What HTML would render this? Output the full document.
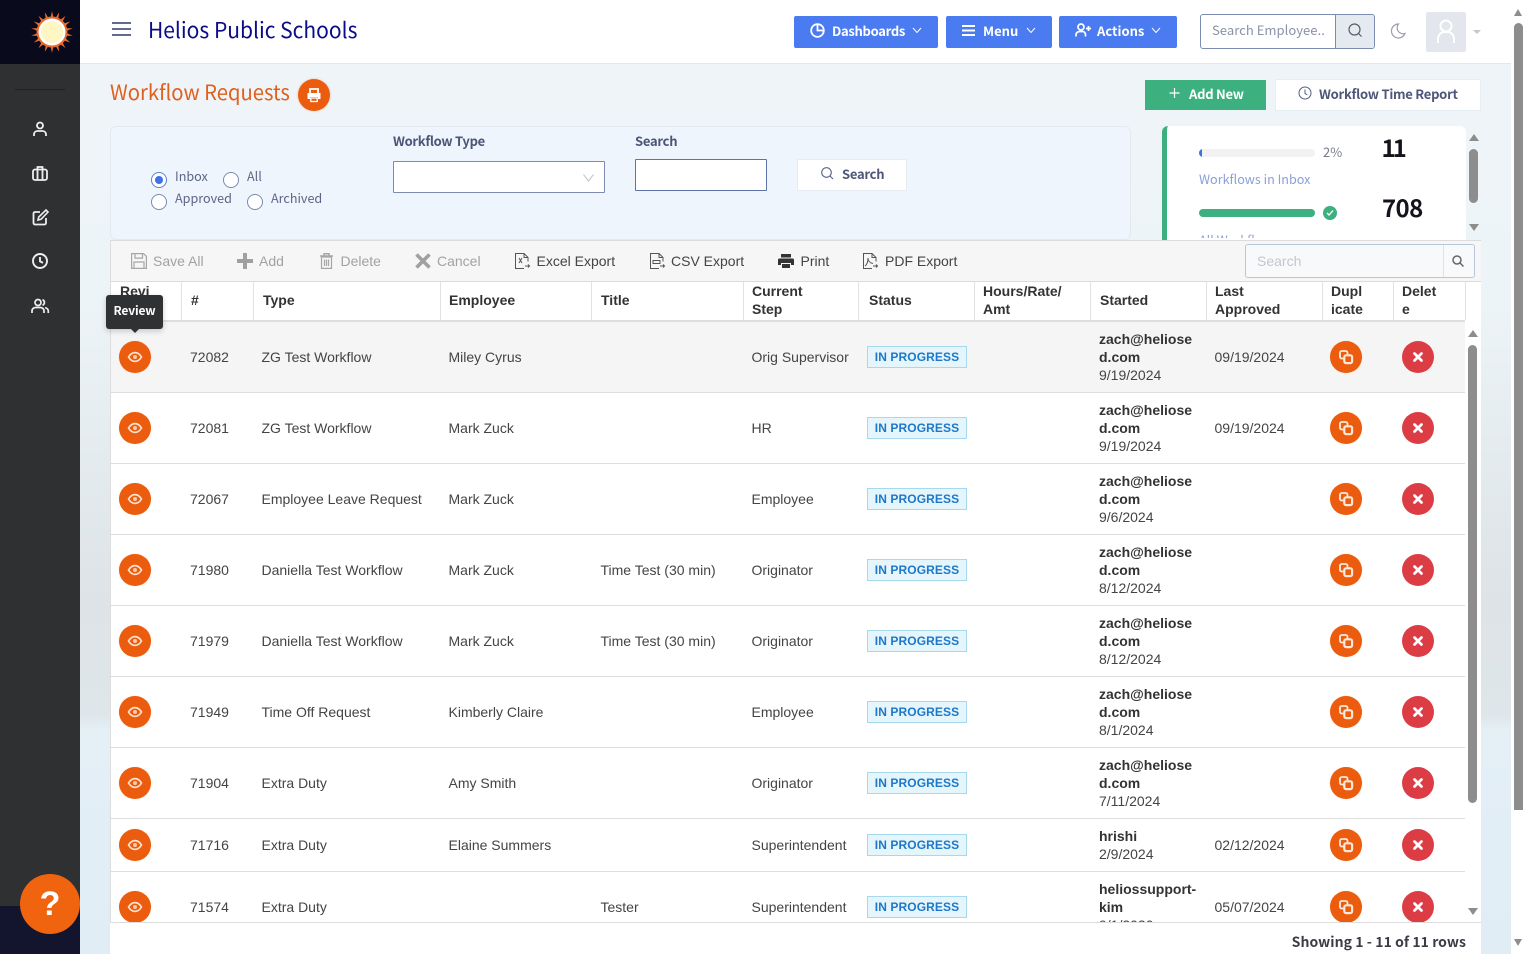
<!DOCTYPE html>
<html lang="en"><head><meta charset="utf-8"><title>Workflow Requests</title>
<style>
*{box-sizing:border-box}
html,body{margin:0;padding:0;width:1526px;height:954px;overflow:hidden}
body{position:relative;font-family:"Liberation Sans",sans-serif;font-size:14px;color:#444;
background:linear-gradient(180deg,#eef4f7 64px,#edf4f8 300px,#e4ebef 460px,#dde3e7 600px,#dfe6ea 715px,#e4eff6 730px,#e0edf5 954px)}
.a{position:absolute;white-space:nowrap}
.n{font-family:"Noto Sans CJK SC","Liberation Sans",sans-serif}
svg{position:absolute;overflow:visible;fill:none}
.btn{position:absolute;top:16px;height:32px;background:#4a7bf0;border-radius:2px;color:#fff}
.btn span{position:absolute;top:0;font:700 13px/30px "Noto Sans CJK SC",sans-serif;white-space:nowrap}
.rd{position:absolute;width:16px;height:16px;border:1px solid #7c89ad;border-radius:50%;background:#fff}
.lab{position:absolute;font:12.6px/16px "Noto Sans CJK SC",sans-serif;color:#5d6686;white-space:nowrap}
.tb{position:absolute;top:240px;height:42px;font-size:14px;line-height:42px;white-space:nowrap}
.g{color:#a2a2a2}
.h{position:absolute;top:281px;height:38px;font-weight:700;color:#333;line-height:18px;white-space:nowrap;display:flex;align-items:center}
.vl{position:absolute;top:282px;height:38px;width:1px;background:#e2e2e2}
.row{position:absolute;left:111px;width:1354px;border-bottom:1px solid #ddd;overflow:visible}
.row>span{position:absolute;white-space:nowrap;top:0;line-height:inherit}
.c1{left:79px}.c2{left:150.5px}.c3{left:337.5px}.c4{left:489.5px}.c5{left:640.5px}.c8{left:988px;line-height:18px!important}.c9{left:1103.5px}
.b{left:756px;height:22px;width:100px;background:#e5f5fc;border:1px solid #a6d8ee;color:#1d78c9;font-weight:700;font-size:12px;line-height:21px!important;text-align:center;letter-spacing:.1px}
.c{position:absolute;width:32px;height:32px;border-radius:50%;background:#ec5c0e;box-shadow:0 0 1px #f9c9a4}
.c.r{background:#dc3d44;box-shadow:none}
.c svg{left:0;top:0}
.e{font-weight:700;color:#333}
</style></head><body>
<svg width="0" height="0" style="position:absolute"><defs>
<symbol id="eye" viewBox="0 0 32 32"><path d="M9.500 16c1.800-3 4-4.400 6.500-4.400s4.700 1.400 6.500 4.400c-1.800 3-4 4.400-6.500 4.400s-4.700-1.400-6.500-4.400z" stroke="#fde3d2" stroke-width="1.700"/><circle cx="16" cy="16" r="2" fill="#fbc9a8"/></symbol>
<symbol id="dup" viewBox="0 0 32 32"><rect x="10" y="10" width="7.500" height="7.500" rx="1.800" stroke="#fde8da" stroke-width="1.800" fill="none"/><rect x="14.300" y="14.300" width="7.800" height="7.800" rx="1.800" fill="#ec5c0e" stroke="#fde8da" stroke-width="2.200"/></symbol>
<symbol id="x" viewBox="0 0 32 32"><path d="M12.500 12.500l7 7M19.500 12.500l-7 7" stroke="#fff" stroke-width="2.700" stroke-linecap="round"/></symbol>
</defs></svg>

<!-- Sidebar -->
<div class="a" style="left:0;top:0;width:80px;height:954px;background:#2e3032"></div>
<div class="a" style="left:0;top:0;width:80px;height:64px;background:#0a0a1d"></div>
<div class="a" style="left:0;top:906px;width:80px;height:48px;background:#13152f"></div>
<svg style="left:52px;top:32px" width="1" height="1"><g fill="#e96c2c">
<polygon points="-4.500,0 4.500,0 0,-21"/><polygon points="-4.500,0 4.500,0 0,-21" transform="rotate(20)"/><polygon points="-4.500,0 4.500,0 0,-21" transform="rotate(40)"/><polygon points="-4.500,0 4.500,0 0,-21" transform="rotate(60)"/><polygon points="-4.500,0 4.500,0 0,-21" transform="rotate(80)"/><polygon points="-4.500,0 4.500,0 0,-21" transform="rotate(100)"/><polygon points="-4.500,0 4.500,0 0,-21" transform="rotate(120)"/><polygon points="-4.500,0 4.500,0 0,-21" transform="rotate(140)"/><polygon points="-4.500,0 4.500,0 0,-21" transform="rotate(160)"/><polygon points="-4.500,0 4.500,0 0,-21" transform="rotate(180)"/><polygon points="-4.500,0 4.500,0 0,-21" transform="rotate(200)"/><polygon points="-4.500,0 4.500,0 0,-21" transform="rotate(220)"/><polygon points="-4.500,0 4.500,0 0,-21" transform="rotate(240)"/><polygon points="-4.500,0 4.500,0 0,-21" transform="rotate(260)"/><polygon points="-4.500,0 4.500,0 0,-21" transform="rotate(280)"/><polygon points="-4.500,0 4.500,0 0,-21" transform="rotate(300)"/><polygon points="-4.500,0 4.500,0 0,-21" transform="rotate(320)"/><polygon points="-4.500,0 4.500,0 0,-21" transform="rotate(340)"/>
<circle r="15.500"/></g><circle r="13.500" fill="#fff"/><circle r="11" fill="#fff6c4"/></svg>
<div class="a" style="left:15px;top:89px;width:50px;height:1px;background:#1e2022"></div>
<svg style="left:32px;top:121px" width="16" height="16" stroke="#eee" stroke-width="1.800"><circle cx="8" cy="4.500" r="3"/><path d="M2 15v-1.500c0-2 1.500-3.500 3.500-3.500h5c2 0 3.500 1.500 3.500 3.500V15"/></svg>
<svg style="left:32px;top:165px" width="16" height="16" stroke="#eee" stroke-width="1.800"><rect x="1" y="4.500" width="14" height="10.500" rx="2"/><path d="M5.500 4.500V2h5v2.500M5.500 4.500V15M10.500 4.500V15"/></svg>
<svg style="left:32px;top:209px" width="16" height="16" stroke="#eee" stroke-width="1.800"><path d="M8 3H3a1.500 1.500 0 0 0-1.500 1.500V14A1.500 1.500 0 0 0 3 15.500h9.500A1.500 1.500 0 0 0 14 14V9"/><path d="M6 11l.7-3L14 1l2 2-7 7.300z" stroke-width="1.600"/></svg>
<svg style="left:32px;top:253px" width="16" height="16" stroke="#eee" stroke-width="1.900"><circle cx="8" cy="8" r="7"/><path d="M8 4v4.300l3 1.600"/></svg>
<svg style="left:31px;top:298px" width="18" height="16" stroke="#eee" stroke-width="1.700"><circle cx="7" cy="4.500" r="3"/><path d="M1 15v-2c0-2 1.500-3.500 3.500-3.500h5c2 0 3.500 1.500 3.500 3.500v2M11.500 1.700a3 3 0 0 1 0 5.600M14 9.700c2 .3 3.300 1.700 3.300 3.500V15"/></svg>
<div class="a" style="left:20px;top:874px;width:60px;height:60px;border-radius:50%;background:#f0640f;color:#fff;font:700 34px/61px 'Liberation Sans',sans-serif;text-align:center">?</div>

<!-- Header -->
<div class="a" style="left:80px;top:0;width:1431px;height:64px;background:#fff;border-bottom:1px solid #e4e8eb"></div>
<svg style="left:112px;top:22px" width="20" height="14" stroke="#4d5680" stroke-width="1.800"><path d="M0 1h19M0 7h19M0 13h19"/></svg>
<div class="a n" style="left:148px;top:11px;font-size:22px;line-height:36px;color:#0c0c8a;transform:scaleX(.955);transform-origin:0 0">Helios Public Schools</div>

<div class="btn" style="left:794px;width:144px"><svg style="left:16px;top:7px" width="15" height="15" stroke="#fff" stroke-width="1.800"><circle cx="7.500" cy="7.500" r="6.300"/><path d="M7.500 1.200V7.500H13.800"/></svg><span style="left:38px;letter-spacing:-.3px">Dashboards</span><svg style="left:118px;top:11px" width="10" height="7" stroke="#fff" stroke-width="1"><path d="M1 1l4 4.500L9 1"/></svg></div>
<div class="btn" style="left:946px;width:106px"><svg style="left:16px;top:9px" width="14" height="11" stroke="#fff" stroke-width="2"><path d="M0 1h13M0 5.500h13M0 10h13"/></svg><span style="left:37px">Menu</span><svg style="left:80px;top:11px" width="10" height="7" stroke="#fff" stroke-width="1"><path d="M1 1l4 4.500L9 1"/></svg></div>
<div class="btn" style="left:1059px;width:118px"><svg style="left:16px;top:7px" width="16" height="14" stroke="#fff" stroke-width="1.700"><circle cx="6" cy="4" r="3"/><path d="M1 13.500v-1.500c0-2 1.500-3.500 3.500-3.500h3c2 0 3 1.500 3 3.500v1.500M13.500 3v5M11 5.500h5"/></svg><span style="left:38px">Actions</span><svg style="left:92px;top:11px" width="10" height="7" stroke="#fff" stroke-width="1"><path d="M1 1l4 4.500L9 1"/></svg></div>

<div class="a" style="left:1200px;top:14px;width:175px;height:35px;border:1px solid #7c8bb0;border-radius:3px;background:#fff"></div>
<div class="a" style="left:1335px;top:15px;width:39px;height:33px;background:#e5e9f0;border-left:1px solid #7c8bb0;border-radius:0 2px 2px 0"></div>
<div class="a n" style="left:1212px;top:13px;font-size:13.100px;line-height:33px;color:#8c93a6">Search Employee..</div>
<svg style="left:1348px;top:23px" width="14" height="14" stroke="#555c70" stroke-width="1.200"><circle cx="6.500" cy="6.500" r="5.500"/><path d="M10.500 10.500l3 3"/></svg>
<svg style="left:1390px;top:23px" width="16" height="16" stroke="#9aa0ac" stroke-width="1.200"><path d="M8.500 1A7 7 0 1 0 15 10.500 6 6 0 0 1 8.500 1z"/></svg>
<div class="a" style="left:1426px;top:12px;width:40px;height:40px;background:#e3e7ed;border-radius:2px"></div>
<svg style="left:1436px;top:19px" width="20" height="26" stroke="#fff" stroke-width="2"><circle cx="10" cy="7" r="5.500"/><path d="M2 24v-4c0-4 3-7 6-7h4c3 0 6 3 6 7v4"/></svg>
<div class="a" style="left:1473px;top:30px;border:4px solid transparent;border-top-color:#c4c8ce"></div>

<!-- Page scrollbar -->
<div class="a" style="left:1511px;top:0;width:15px;height:954px;background:#fff"></div>
<div class="a" style="left:1514px;top:23px;width:9px;height:787px;background:#8d8d8d;border-radius:5px 5px 0 0"></div>
<div class="a" style="left:1514px;top:9px;border:4.500px solid transparent;border-top:0;border-bottom:7px solid #8d8d8d"></div>
<div class="a" style="left:1514px;top:939px;border:4.500px solid transparent;border-bottom:0;border-top:7px solid #8d8d8d"></div>

<!-- Title row -->
<div class="a n" style="left:110px;top:76px;font-size:21px;line-height:32px;color:#e0601e;transform:scaleX(.962);transform-origin:0 0">Workflow Requests</div>
<div class="a" style="left:298px;top:79px;width:32px;height:32px;border-radius:50%;background:#ec5c0e;box-shadow:0 0 2px #f6b98e"></div>
<svg style="left:306px;top:87px" width="16" height="16"><path d="M4 6V2h8v4" stroke="#fff" stroke-width="1.800"/><path d="M1.500 6h13v6H12v-2H4v2H1.500z" fill="#fff"/><rect x="4.800" y="11" width="6.400" height="3.500" stroke="#fff" stroke-width="1.300"/></svg>
<div class="a" style="left:1145px;top:80px;width:121px;height:30px;background:#3db07f"></div>
<svg style="left:1169px;top:88px" width="11" height="11" stroke="#fff" stroke-width="1.200"><path d="M5.500 0v10M.5 5h10"/></svg>
<div class="a n" style="left:1189px;top:79px;font-size:13px;font-weight:700;line-height:29px;color:#fff;letter-spacing:-.25px">Add New</div>
<div class="a" style="left:1275px;top:79px;width:206px;height:32px;background:#fff;border:1px solid #e6eef2"></div>
<svg style="left:1298px;top:86px" width="14" height="14" stroke="#535c80" stroke-width="1"><circle cx="7" cy="7" r="6"/><path d="M7 3.500V7.500l2.300 1.300"/></svg>
<div class="a n" style="left:1319px;top:79px;font-size:13px;font-weight:700;line-height:29px;color:#4e5679;letter-spacing:-.25px">Workflow Time Report</div>

<!-- Filter panel -->
<div class="a" style="left:110px;top:126px;width:1021px;height:114px;background:#eef5fc;border:1px solid #e2e9f0;border-radius:6px"></div>
<div class="rd" style="left:151px;top:172px;border-color:#5f7fd6"></div><div class="a" style="left:155px;top:176px;width:8px;height:8px;border-radius:50%;background:#3f72e2"></div>
<div class="rd" style="left:223px;top:172px"></div><div class="rd" style="left:151px;top:194px"></div><div class="rd" style="left:247px;top:194px"></div>
<div class="lab" style="left:175px;top:168px">Inbox</div><div class="lab" style="left:247px;top:168px">All</div><div class="lab" style="left:175px;top:190px">Approved</div><div class="lab" style="left:271px;top:190px">Archived</div>
<div class="a n" style="left:393px;top:132px;font-size:13px;font-weight:700;line-height:18px;color:#4c5578;letter-spacing:-.3px">Workflow Type</div>
<div class="a" style="left:393px;top:161px;width:212px;height:32px;background:#fff;border:1px solid #7c8bb0;border-radius:1px"></div>
<svg style="left:583px;top:174px" width="11" height="8" stroke="#b8bec9" stroke-width="1"><path d="M.5.500l5 6.500 5-6.500"/></svg>
<div class="a n" style="left:635px;top:132px;font-size:13px;font-weight:700;line-height:18px;color:#4c5578;letter-spacing:-.25px">Search</div>
<div class="a" style="left:635px;top:159px;width:132px;height:32px;background:#fff;border:1px solid #5f73ab;border-radius:1px"></div>
<div class="a" style="left:797px;top:159px;width:110px;height:32px;background:#fff;border:1px solid #e6ecf2"></div>
<svg style="left:821px;top:167px" width="13" height="13" stroke="#596284" stroke-width="1.100"><circle cx="5.500" cy="5.500" r="4.800"/><path d="M9 9l3 3"/></svg>
<div class="a n" style="left:842px;top:159px;font-size:13px;font-weight:700;line-height:30px;color:#4e5679;letter-spacing:-.25px">Search</div>

<!-- Stats card -->
<div class="a" style="left:1162px;top:126px;width:304px;height:116px;background:#fff;border-left:5px solid #3db07f;border-radius:6px 6px 0 0;overflow:hidden">
<div class="a" style="left:32px;top:23px;width:116px;height:8px;background:#f2f2f2;border-radius:4px;overflow:hidden"><div style="width:3px;height:8px;background:#3f72e2"></div></div>
<div class="a n" style="left:156px;top:16px;font-size:13px;line-height:20px;color:#777d8c">2%</div>
<div class="a n" style="left:214.500px;top:3px;font-size:24px;font-weight:700;line-height:36px;color:#14141c;letter-spacing:-3px">11</div>
<div class="a n" style="left:32px;top:44px;font-size:12.600px;line-height:18px;color:#8a9fdc">Workflows in Inbox</div>
<div class="a" style="left:32px;top:83px;width:116px;height:8px;background:#3db07f;border-radius:4px"></div>
<div class="a" style="left:156px;top:80px;width:14px;height:14px;border-radius:50%;background:#3db07f"></div>
<svg style="left:159px;top:83px" width="8" height="8" stroke="#fff" stroke-width="1.300"><path d="M1 4l2 2 4-4.500"/></svg>
<div class="a n" style="left:215px;top:63px;font-size:24px;font-weight:700;line-height:36px;color:#14141c;letter-spacing:-.6px">708</div>
<div class="a" style="left:32px;top:0;width:200px;height:112px;overflow:hidden"><div class="a n" style="left:0;top:105px;font-size:12.600px;line-height:18px;color:#8a9fdc">All Workflows</div></div>
</div>
<div class="a" style="left:1469px;top:134px;border:5px solid transparent;border-top:0;border-bottom:7px solid #8d8d8d"></div>
<div class="a" style="left:1469px;top:149px;width:9px;height:54px;background:#8d8d8d;border-radius:5px"></div>
<div class="a" style="left:1469px;top:224px;border:5px solid transparent;border-bottom:0;border-top:7px solid #8d8d8d"></div>

<!-- Grid -->
<div class="a" style="left:110px;top:240px;width:1371px;height:682px;background:#fff;border-left:1px solid #ddd"></div>
<div class="a" style="left:110px;top:240px;width:1371px;height:42px;background:#f6f6f6;border:1px solid #dcdcdc;border-width:1px 0 1px 1px"></div>
<svg style="left:131px;top:253px" width="16" height="16" stroke="#a6a6a6" stroke-width="1.200"><path d="M.6.600h12l2.800 2.800v12H.6zM4 .6v4.500h7.500V.6M3 15.400V9h10v6.400"/></svg><div class="tb g" style="left:153px">Save All</div>
<svg style="left:237px;top:253px" width="16" height="16"><path d="M6 0h4v6h6v4h-6v6H6v-6H0V6h6z" fill="#a0a0a0"/></svg><div class="tb g" style="left:259px">Add</div>
<svg style="left:320px;top:253px" width="13" height="16" stroke="#a6a6a6" stroke-width="1.200"><path d="M1.500 4h10v11.400h-10zM4.500 6.500v6.500M6.500 6.500v6.500M8.500 6.500v6.500"/><path d="M0 3h13M4 3V.8h5V3" stroke-width="1.500"/></svg><div class="tb g" style="left:340.500px">Delete</div>
<svg style="left:415px;top:253px" width="16" height="16" stroke="#a0a0a0" stroke-width="3.600"><path d="M1.500 1.500l13 13M14.500 1.500l-13 13"/></svg><div class="tb g" style="left:437px">Cancel</div>
<svg style="left:515px;top:253px" width="15" height="16" stroke="#555" stroke-width="1"><path d="M9 15.500H.5V.5H9l4 4v4M9 .5v4h4M10 13h4.500M13 11.500l1.500 1.500-1.500 1.500"/><path d="M4 5l3 5M7 5l-3 5"/></svg><div class="tb" style="left:536.500px">Excel Export</div>
<svg style="left:650px;top:253px" width="15" height="16" stroke="#555" stroke-width="1"><path d="M9 15.500H.5V.5H9l4 4v4M9 .5v4h4M10 13h4.500M13 11.500l1.500 1.500-1.500 1.500M3 7.500h7v3H3z"/></svg><div class="tb" style="left:671px">CSV Export</div>
<svg style="left:778px;top:254px" width="16" height="14"><path d="M3 0h10v3.500H3z" fill="#333"/><path d="M1.500 4.500h13A1.500 1.500 0 0 1 16 6v5h-3V9H3v2H0V6a1.500 1.500 0 0 1 1.500-1.500z" fill="#333"/><path d="M4 10h8v4H4z" fill="#333"/></svg><div class="tb" style="left:800.500px">Print</div>
<svg style="left:863px;top:253px" width="15" height="16" stroke="#555" stroke-width="1"><path d="M9 15.500H.5V.5H9l4 4v4M9 .5v4h4M10 13h4.500M13 11.500l1.500 1.500-1.500 1.500M2 13c2-1.500 3-4 3-8 0 3 2 5 5 5.500"/></svg><div class="tb" style="left:885px">PDF Export</div>
<div class="a" style="left:1245px;top:244px;width:230px;height:34px;background:#f8f9fb;border:1px solid #b9c4de;border-radius:3px"></div>
<div class="a" style="left:1443px;top:245px;width:1px;height:32px;background:#dfe2e8"></div>
<div class="a" style="left:1257px;top:244px;line-height:34px;color:#c2c6d0">Search</div>
<svg style="left:1452px;top:255px" width="12" height="12" stroke="#666" stroke-width="1.500"><circle cx="5" cy="5" r="4"/><path d="M8 8l3.500 3.500"/></svg>

<!-- Column headers -->
<div class="vl" style="left:181px"></div><div class="vl" style="left:253px"></div><div class="vl" style="left:440px"></div><div class="vl" style="left:591px"></div><div class="vl" style="left:743px"></div><div class="vl" style="left:858px"></div><div class="vl" style="left:974px"></div><div class="vl" style="left:1090px"></div><div class="vl" style="left:1206px"></div><div class="vl" style="left:1322px"></div><div class="vl" style="left:1393px"></div><div class="vl" style="left:1465px"></div>
<div class="h" style="left:120px">Revi<br>ew</div><div class="h" style="left:191px">#</div><div class="h" style="left:263px">Type</div><div class="h" style="left:449px">Employee</div><div class="h" style="left:601px">Title</div><div class="h" style="left:752px">Current<br>Step</div><div class="h" style="left:869px">Status</div><div class="h" style="left:983px">Hours/Rate/<br>Amt</div><div class="h" style="left:1100px">Started</div><div class="h" style="left:1215px">Last<br>Approved</div><div class="h" style="left:1331px">Dupl<br>icate</div><div class="h" style="left:1402px">Delet<br>e</div>
<div class="a" style="left:111px;top:320px;width:1354px;height:2px;background:#dedede"></div>

<!-- Rows -->
<div style="position:absolute;left:0;top:0;width:1526px;height:922px;overflow:hidden">
<div class="row" style="top:322px;height:71px;line-height:70px;background:#f5f5f5"><span class="c1">72082</span><span class="c2">ZG Test Workflow</span><span class="c3">Miley Cyrus</span><span class="c5">Orig Supervisor</span><span class="b" style="top:24px">IN PROGRESS</span><span class="c8" style="top:8px"><b class="e">zach@heliose<br>d.com</b><br>9/19/2024</span><span class="c9">09/19/2024</span></div>
<div class="row" style="top:393px;height:71px;line-height:70px"><span class="c1">72081</span><span class="c2">ZG Test Workflow</span><span class="c3">Mark Zuck</span><span class="c5">HR</span><span class="b" style="top:24px">IN PROGRESS</span><span class="c8" style="top:8px"><b class="e">zach@heliose<br>d.com</b><br>9/19/2024</span><span class="c9">09/19/2024</span></div>
<div class="row" style="top:464px;height:71px;line-height:70px"><span class="c1">72067</span><span class="c2">Employee Leave Request</span><span class="c3">Mark Zuck</span><span class="c5">Employee</span><span class="b" style="top:24px">IN PROGRESS</span><span class="c8" style="top:8px"><b class="e">zach@heliose<br>d.com</b><br>9/6/2024</span></div>
<div class="row" style="top:535px;height:71px;line-height:70px"><span class="c1">71980</span><span class="c2">Daniella Test Workflow</span><span class="c3">Mark Zuck</span><span class="c4">Time Test (30 min)</span><span class="c5">Originator</span><span class="b" style="top:24px">IN PROGRESS</span><span class="c8" style="top:8px"><b class="e">zach@heliose<br>d.com</b><br>8/12/2024</span></div>
<div class="row" style="top:606px;height:71px;line-height:70px"><span class="c1">71979</span><span class="c2">Daniella Test Workflow</span><span class="c3">Mark Zuck</span><span class="c4">Time Test (30 min)</span><span class="c5">Originator</span><span class="b" style="top:24px">IN PROGRESS</span><span class="c8" style="top:8px"><b class="e">zach@heliose<br>d.com</b><br>8/12/2024</span></div>
<div class="row" style="top:677px;height:71px;line-height:70px"><span class="c1">71949</span><span class="c2">Time Off Request</span><span class="c3">Kimberly Claire</span><span class="c5">Employee</span><span class="b" style="top:24px">IN PROGRESS</span><span class="c8" style="top:8px"><b class="e">zach@heliose<br>d.com</b><br>8/1/2024</span></div>
<div class="row" style="top:748px;height:71px;line-height:70px"><span class="c1">71904</span><span class="c2">Extra Duty</span><span class="c3">Amy Smith</span><span class="c5">Originator</span><span class="b" style="top:24px">IN PROGRESS</span><span class="c8" style="top:8px"><b class="e">zach@heliose<br>d.com</b><br>7/11/2024</span></div>
<div class="row" style="top:819px;height:53px;line-height:52px"><span class="c1">71716</span><span class="c2">Extra Duty</span><span class="c3">Elaine Summers</span><span class="c5">Superintendent</span><span class="b" style="top:15px">IN PROGRESS</span><span class="c8" style="top:8px"><b class="e">hrishi</b><br>2/9/2024</span><span class="c9">02/12/2024</span></div>
<div class="row" style="top:872px;height:71px;line-height:70px"><span class="c1" style="line-height:70px">71574</span><span class="c2">Extra Duty</span><span class="c4">Tester</span><span class="c5">Superintendent</span><span class="b" style="top:24px">IN PROGRESS</span><span class="c8" style="top:8px"><b class="e">heliossupport-<br>kim</b><br>9/1/2020</span><span class="c9">05/07/2024</span></div>

<div class="c" style="left:119px;top:341px"><svg width="32" height="32"><use href="#eye"/></svg></div><div class="c" style="left:1330px;top:341px"><svg width="32" height="32"><use href="#dup"/></svg></div><div class="c r" style="left:1402px;top:341px"><svg width="32" height="32"><use href="#x"/></svg></div>
<div class="c" style="left:119px;top:412px"><svg width="32" height="32"><use href="#eye"/></svg></div><div class="c" style="left:1330px;top:412px"><svg width="32" height="32"><use href="#dup"/></svg></div><div class="c r" style="left:1402px;top:412px"><svg width="32" height="32"><use href="#x"/></svg></div>
<div class="c" style="left:119px;top:483px"><svg width="32" height="32"><use href="#eye"/></svg></div><div class="c" style="left:1330px;top:483px"><svg width="32" height="32"><use href="#dup"/></svg></div><div class="c r" style="left:1402px;top:483px"><svg width="32" height="32"><use href="#x"/></svg></div>
<div class="c" style="left:119px;top:554px"><svg width="32" height="32"><use href="#eye"/></svg></div><div class="c" style="left:1330px;top:554px"><svg width="32" height="32"><use href="#dup"/></svg></div><div class="c r" style="left:1402px;top:554px"><svg width="32" height="32"><use href="#x"/></svg></div>
<div class="c" style="left:119px;top:625px"><svg width="32" height="32"><use href="#eye"/></svg></div><div class="c" style="left:1330px;top:625px"><svg width="32" height="32"><use href="#dup"/></svg></div><div class="c r" style="left:1402px;top:625px"><svg width="32" height="32"><use href="#x"/></svg></div>
<div class="c" style="left:119px;top:696px"><svg width="32" height="32"><use href="#eye"/></svg></div><div class="c" style="left:1330px;top:696px"><svg width="32" height="32"><use href="#dup"/></svg></div><div class="c r" style="left:1402px;top:696px"><svg width="32" height="32"><use href="#x"/></svg></div>
<div class="c" style="left:119px;top:767px"><svg width="32" height="32"><use href="#eye"/></svg></div><div class="c" style="left:1330px;top:767px"><svg width="32" height="32"><use href="#dup"/></svg></div><div class="c r" style="left:1402px;top:767px"><svg width="32" height="32"><use href="#x"/></svg></div>
<div class="c" style="left:119px;top:829px"><svg width="32" height="32"><use href="#eye"/></svg></div><div class="c" style="left:1330px;top:829px"><svg width="32" height="32"><use href="#dup"/></svg></div><div class="c r" style="left:1402px;top:829px"><svg width="32" height="32"><use href="#x"/></svg></div>
<div class="c" style="left:119px;top:891px"><svg width="32" height="32"><use href="#eye"/></svg></div><div class="c" style="left:1330px;top:891px"><svg width="32" height="32"><use href="#dup"/></svg></div><div class="c r" style="left:1402px;top:891px"><svg width="32" height="32"><use href="#x"/></svg></div>
</div>

<!-- Grid scrollbar -->
<div class="a" style="left:1468px;top:330px;border:5px solid transparent;border-top:0;border-bottom:7px solid #8d8d8d"></div>
<div class="a" style="left:1468px;top:345px;width:9px;height:458px;background:#8d8d8d;border-radius:5px"></div>
<div class="a" style="left:1468px;top:908px;border:5px solid transparent;border-bottom:0;border-top:7px solid #8d8d8d"></div>

<!-- Footer -->
<div class="a" style="left:110px;top:922px;width:1371px;height:32px;background:#fff;border-top:1px solid #ddd"></div>
<div class="a n" style="right:60px;top:931px;font-size:14px;font-weight:700;line-height:22px;color:#3a3d45;letter-spacing:.05px">Showing 1 - 11 of 11 rows</div>

<!-- Tooltip -->
<div class="a" style="left:106px;top:295px;width:57px;height:34px;background:#2f3133;border-radius:3px;box-shadow:0 2px 6px rgba(0,0,0,.2)"></div>
<div class="a" style="left:131px;top:329px;border:4px solid transparent;border-bottom:0;border-top:4px solid #2f3133"></div>
<div class="a n" style="left:106px;top:295px;width:57px;text-align:center;color:#fff;font-size:12px;font-weight:700;line-height:32px;letter-spacing:-.15px">Review</div>
</body></html>
